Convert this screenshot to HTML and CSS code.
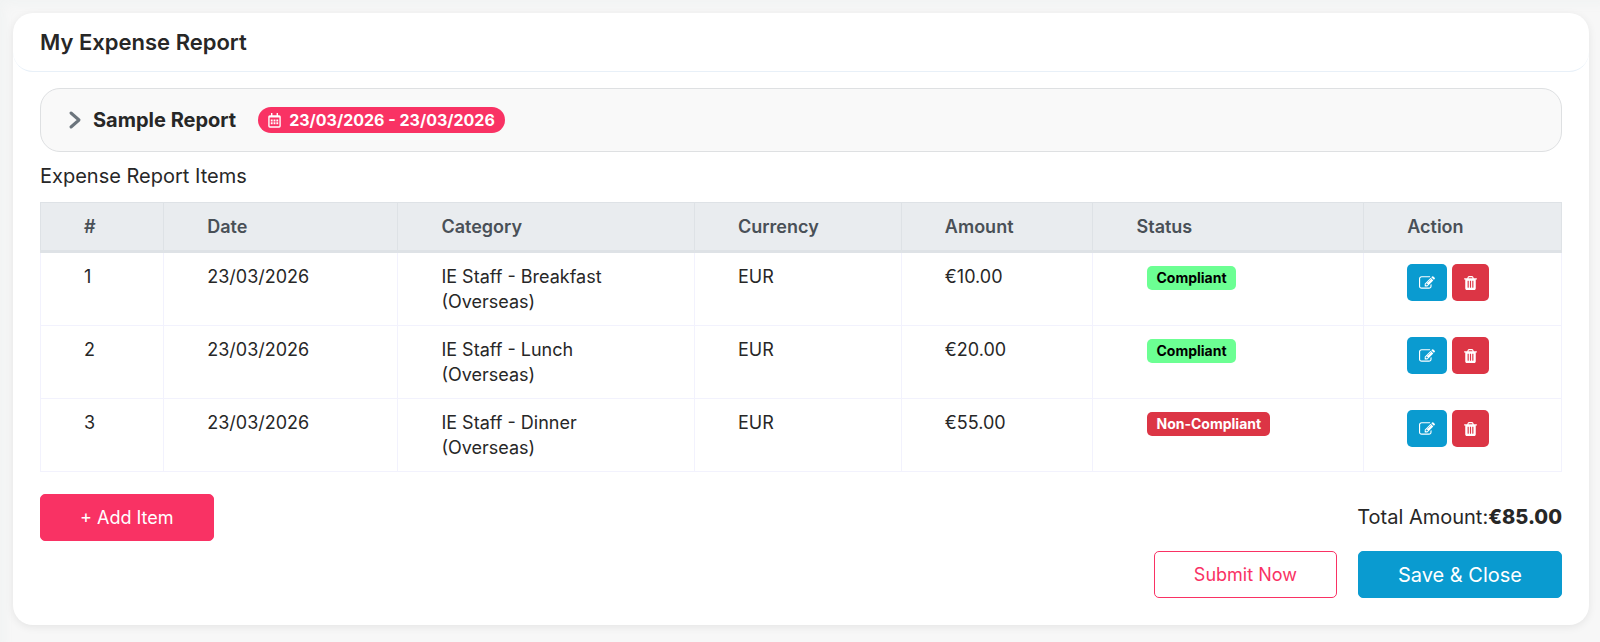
FILE: index.html
```html
<!DOCTYPE html>
<html lang="en">
<head>
  <meta charset="UTF-8">
  <meta name="viewport" content="width=device-width, initial-scale=1.0">
  <title>My Expense Report</title>
  <link rel="stylesheet" href="styles.css">
</head>
<body>
  <!-- shared icons -->
  <svg class="sprite" aria-hidden="true">
    <symbol id="icon-edit" viewBox="0 0 1792 1792">
      <path d="M888 1184l116-116-152-152-116 116v56h96v96h56zm440-720q-16-16-33 1l-350 350q-17 17-1 33t33-1l350-350q17-17 1-33zm80 594v190q0 119-84.500 203.500t-203.500 84.500h-832q-119 0-203.500-84.500t-84.500-203.500v-832q0-119 84.500-203.500t203.500-84.500h832q63 0 117 25 15 7 18 23 3 17-9 29l-49 49q-14 14-32 8-23-6-45-6h-832q-66 0-113 47t-47 113v832q0 66 47 113t113 47h832q66 0 113-47t47-113v-126q0-13 9-22l64-64q15-15 35-7t20 29zm-96-738l288 288-672 672h-288v-288zm444 132l-92 92-288-288 92-92q28-28 68-28t68 28l152 152q28 28 28 68t-28 68z"/>
    </symbol>
    <symbol id="icon-trash" viewBox="0 0 1408 1536">
      <path d="M512 1248v-704q0-14-9-23t-23-9h-64q-14 0-23 9t-9 23v704q0 14 9 23t23 9h64q14 0 23-9t9-23zm256 0v-704q0-14-9-23t-23-9h-64q-14 0-23 9t-9 23v704q0 14 9 23t23 9h64q14 0 23-9t9-23zm256 0v-704q0-14-9-23t-23-9h-64q-14 0-23 9t-9 23v704q0 14 9 23t23 9h64q14 0 23-9t9-23zM480 256h448l-48-117q-7-9-17-11H546q-10 2-17 11zm928 32v64q0 14-9 23t-23 9h-96v948q0 83-47 143.500t-113 60.500H288q-66 0-113-58.500T128 1336V384H32q-14 0-23-9t-9-23v-64q0-14 9-23t23-9h309l70-167q15-37 54-63t79-26h320q40 0 79 26t54 63l70 167h309q14 0 23 9t9 23z"/>
    </symbol>
  </svg>

  <main class="card">
    <header class="card-header">
      <h1>My Expense Report</h1>
    </header>

    <div class="card-body">
      <section class="report">
        <button type="button" class="toggle" aria-label="Expand report">
          <svg viewBox="0 0 14 20"><path d="M3 3l8 7-8 7"/></svg>
        </button>
        <h2>Sample Report</h2>
        <span class="period">
          <svg viewBox="0 0 14 16">
            <path class="line" d="M2 3h10a1 1 0 0 1 1 1v10a1 1 0 0 1-1 1H2a1 1 0 0 1-1-1V4a1 1 0 0 1 1-1zM4 0v3M10 0v3M1 4h12"/>
            <path class="dots" d="M3 7h2v2H3zM6 7h2v2H6zM9 7h2v2H9zM3 10h2v2H3zM6 10h2v2H6zM9 10h2v2H9z"/>
          </svg>
          23/03/2026 - 23/03/2026
        </span>
      </section>

      <h3>Expense Report Items</h3>

      <table class="items">
        <thead>
          <tr>
            <th class="col-no">#</th>
            <th class="col-date">Date</th>
            <th class="col-category">Category</th>
            <th class="col-currency">Currency</th>
            <th class="col-amount">Amount</th>
            <th class="col-status">Status</th>
            <th class="col-action">Action</th>
          </tr>
        </thead>
        <tbody>
          <tr>
            <td>1</td>
            <td>23/03/2026</td>
            <td>IE Staff - Breakfast (Overseas)</td>
            <td>EUR</td>
            <td>€10.00</td>
            <td><span class="badge badge-success">Compliant</span></td>
            <td>
              <div class="actions">
                <button type="button" class="btn-icon edit" aria-label="Edit item 1"><svg><use href="#icon-edit"/></svg></button>
                <button type="button" class="btn-icon delete" aria-label="Delete item 1"><svg><use href="#icon-trash"/></svg></button>
              </div>
            </td>
          </tr>
          <tr>
            <td>2</td>
            <td>23/03/2026</td>
            <td>IE Staff - Lunch (Overseas)</td>
            <td>EUR</td>
            <td>€20.00</td>
            <td><span class="badge badge-success">Compliant</span></td>
            <td>
              <div class="actions">
                <button type="button" class="btn-icon edit" aria-label="Edit item 2"><svg><use href="#icon-edit"/></svg></button>
                <button type="button" class="btn-icon delete" aria-label="Delete item 2"><svg><use href="#icon-trash"/></svg></button>
              </div>
            </td>
          </tr>
          <tr>
            <td>3</td>
            <td>23/03/2026</td>
            <td>IE Staff - Dinner (Overseas)</td>
            <td>EUR</td>
            <td>€55.00</td>
            <td><span class="badge badge-danger">Non-Compliant</span></td>
            <td>
              <div class="actions">
                <button type="button" class="btn-icon edit" aria-label="Edit item 3"><svg><use href="#icon-edit"/></svg></button>
                <button type="button" class="btn-icon delete" aria-label="Delete item 3"><svg><use href="#icon-trash"/></svg></button>
              </div>
            </td>
          </tr>
        </tbody>
      </table>

      <div class="summary">
        <button type="button" class="btn btn-add">+ Add Item</button>
        <p class="total">Total Amount:<strong>€85.00</strong></p>
      </div>

      <div class="form-actions">
        <button type="button" class="btn btn-submit">Submit Now</button>
        <button type="button" class="btn btn-save">Save &amp; Close</button>
      </div>
    </div>
  </main>
</body>
</html>
```
FILE: styles.css
```css
* {
  box-sizing: border-box;
}
body {
  margin: 0;
  padding: 13px 11px 17px 13px;
  background: #f7f7f7;
  box-shadow: inset 8px 8px 12px -4px #f1f3f3;
  font-family: Inter, Roboto, sans-serif;
  font-size: 18px;
  line-height: 25px;
  color: #272727;
}
h1, h2, h3, p {
  margin: 0;
}
button {
  font-family: inherit;
  cursor: pointer;
}
.sprite {
  display: none;
}
.card {
  background: #fff;
  border-radius: 20px;
  box-shadow: 0 2px 8px rgba(0, 0, 0, 0.08);
}
.card-header {
  padding: 16px 27px;
  border-bottom: 1px solid #e8f0f8;
  border-radius: 20px;
}
.card-header h1 {
  font-size: 22px;
  line-height: 26px;
  font-weight: 600;
}
.card-body {
  padding: 16px 27px 27px;
}
.report {
  display: flex;
  align-items: center;
  height: 64px;
  padding: 0 27px;
  background: #f9f9f9;
  border: 1px solid #dee0e2;
  border-radius: 20px;
}
.toggle {
  display: flex;
  padding: 0;
  border: 0;
  background: none;
}
.toggle svg {
  width: 14px;
  height: 20px;
  fill: none;
  stroke: #6c757d;
  stroke-width: 3;
  stroke-linecap: round;
  stroke-linejoin: round;
}
.report h2 {
  margin: 0 22px 0 11px;
  font-size: 20px;
  font-weight: 700;
}
.period {
  display: flex;
  align-items: center;
  gap: 8px;
  height: 26px;
  padding: 0 10px;
  border-radius: 13px;
  background: #f93264;
  color: #fff;
  font-size: 16px;
  font-weight: 700;
}
.period svg {
  width: 13px;
  height: 15px;
}
.period .line {
  fill: none;
  stroke: #fff;
  stroke-width: 1.5;
}
.period .dots {
  fill: #fff;
}
h3 {
  margin: 12px 0 13px;
  font-size: 20px;
  font-weight: 400;
}
.items {
  width: 100%;
  table-layout: fixed;
  border-collapse: collapse;
}
.items th,
.items td {
  padding: 11px 42px 11px 43px;
  text-align: left;
  vertical-align: top;
}
.items th {
  background: #e9ecef;
  border: 1px solid #dee2e6;
  border-bottom-width: 3px;
  color: #495057;
  font-weight: 600;
}
.items td {
  border: 1px solid #f2f2fd;
}
.items .col-no { width: 8.1%; }
.items .col-date { width: 15.4%; }
.items .col-category { width: 19.5%; }
.items .col-currency { width: 13.6%; }
.items .col-amount { width: 12.6%; }
.items .col-status { width: 17.8%; }
.items .col-action { width: 13%; }
.badge {
  display: inline-block;
  margin: 1px 0 0 11px;
  padding: 0 9px;
  border-radius: 5px;
  font-size: 14px;
  line-height: 24px;
  font-weight: 700;
  white-space: nowrap;
}
.badge-success {
  background: #6cff93;
  color: #000;
}
.badge-danger {
  background: #dc3545;
  color: #fff;
}
.actions {
  display: flex;
  gap: 5px;
}
.btn-icon {
  display: flex;
  align-items: center;
  justify-content: center;
  height: 37px;
  padding: 0 12px;
  border: 0;
  border-radius: 5px;
}
.btn-icon svg {
  width: 16px;
  height: 16px;
  fill: #fff;
}
.btn-icon.edit {
  background: #0a9bd0;
}
.btn-icon.delete {
  background: #dc3545;
}
.btn-icon.delete svg {
  width: 13px;
  height: 14px;
}
.summary {
  display: flex;
  align-items: center;
  justify-content: space-between;
  margin-top: 22px;
}
.total {
  font-size: 20px;
}
.total strong {
  font-weight: 800;
}
.form-actions {
  display: flex;
  justify-content: flex-end;
  gap: 21px;
  margin-top: 10px;
}
.btn {
  height: 47px;
  padding: 0 39px;
  border: 1px solid;
  border-radius: 5px;
  font-size: 18px;
}
.btn-add {
  background: #f93264;
  border-color: #f93264;
  color: #fff;
}
.btn-submit {
  background: #fff;
  border-color: #f93264;
  color: #f93264;
}
.btn-save {
  background: #0a9bd0;
  border-color: #0a9bd0;
  color: #fff;
  font-size: 20px;
}
```
